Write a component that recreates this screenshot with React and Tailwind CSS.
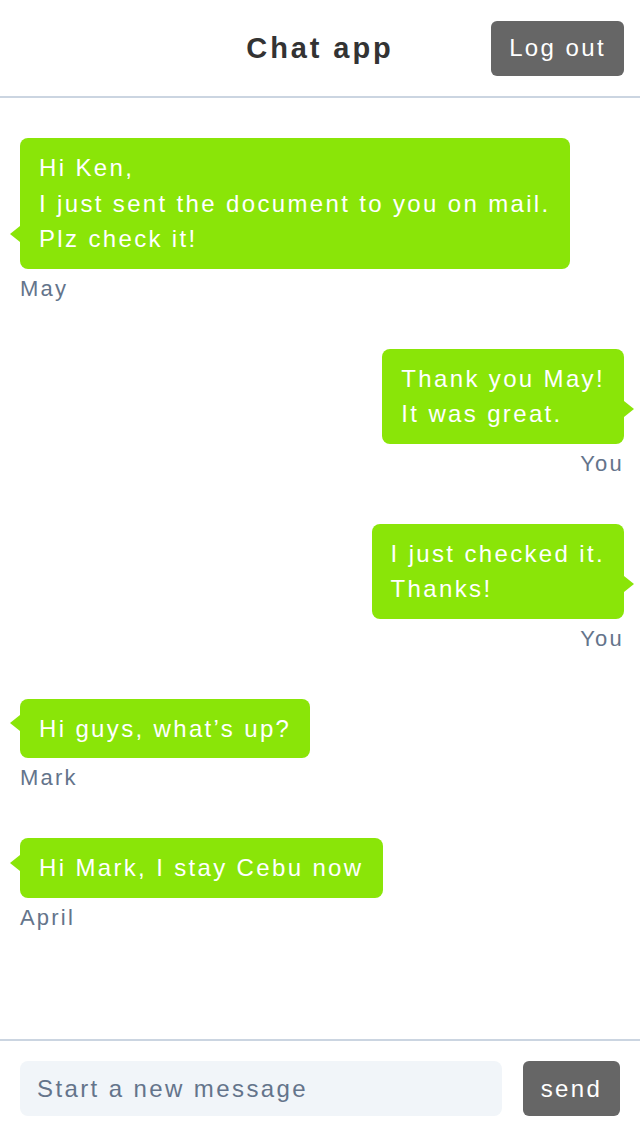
import React from 'react'

const messages = [
  { from: 'May', lines: ['Hi Ken,', 'I just sent the document to you on mail.', 'Plz check it!'], mine: false },
  { from: 'You', lines: ['Thank you May!', 'It was great.'], mine: true },
  { from: 'You', lines: ['I just checked it.', 'Thanks!'], mine: true },
  { from: 'Mark', lines: ['Hi guys, what’s up?'], mine: false },
  { from: 'April', lines: ['Hi Mark, I stay Cebu now'], mine: false },
]

const Bubble = ({ msg }) => (
  <div className={`flex flex-col ${msg.mine ? 'items-end' : 'items-start'}`}>
    <div className="relative rounded-lg bg-[#8ae508] px-[19px] py-3 text-[24px] leading-[35.5px] tracking-[2.35px] text-white">
      {msg.lines.map((line, i) => (
        <div key={i}>{line}</div>
      ))}
      {/* little tail pointing at the sender */}
      {msg.mine ? (
        <span className="absolute bottom-[27px] right-[-10px] h-0 w-0 border-y-8 border-l-[10px] border-y-transparent border-l-[#8ae508]" />
      ) : (
        <span className="absolute bottom-[27px] left-[-10px] h-0 w-0 border-y-8 border-r-[10px] border-y-transparent border-r-[#8ae508]" />
      )}
    </div>
    <div className="mt-[3px] text-[22px] leading-[33px] tracking-[0.1em] text-[#64748b]">
      {msg.from}
    </div>
  </div>
)

export default function App() {
  return (
    <div className="flex h-screen flex-col bg-white font-['Liberation_Sans',Arial,sans-serif]">
      <header className="grid h-[98px] shrink-0 grid-cols-3 items-center border-b-2 border-[#cbd5e1] px-4">
        <div />
        <h1 className="pt-[2px] text-center text-[29px] font-bold tracking-[0.1em] text-[#333]">
          Chat app
        </h1>
        <div className="flex justify-end">
          <button className="h-[55px] rounded-md bg-[#666] px-[18px] text-[24px] tracking-[0.1em] text-white">
            Log out
          </button>
        </div>
      </header>

      <main className="flex flex-1 flex-col gap-[44px] overflow-y-auto pl-5 pr-4 pt-10">
        {messages.map((msg, i) => (
          <Bubble key={i} msg={msg} />
        ))}
      </main>

      <footer className="flex shrink-0 items-center gap-[21px] border-t-2 border-[#cbd5e1] py-5 pl-5 pr-5">
        <input
          type="text"
          placeholder="Start a new message"
          className="h-[55px] flex-1 rounded-lg bg-[#f1f5f9] px-[17px] text-[24px] tracking-[0.1em] text-[#334155] outline-none placeholder:text-[#64748b]"
        />
        <button className="h-[55px] w-[97px] rounded-md bg-[#666] text-[24px] tracking-[0.1em] text-white">
          send
        </button>
      </footer>
    </div>
  )
}
